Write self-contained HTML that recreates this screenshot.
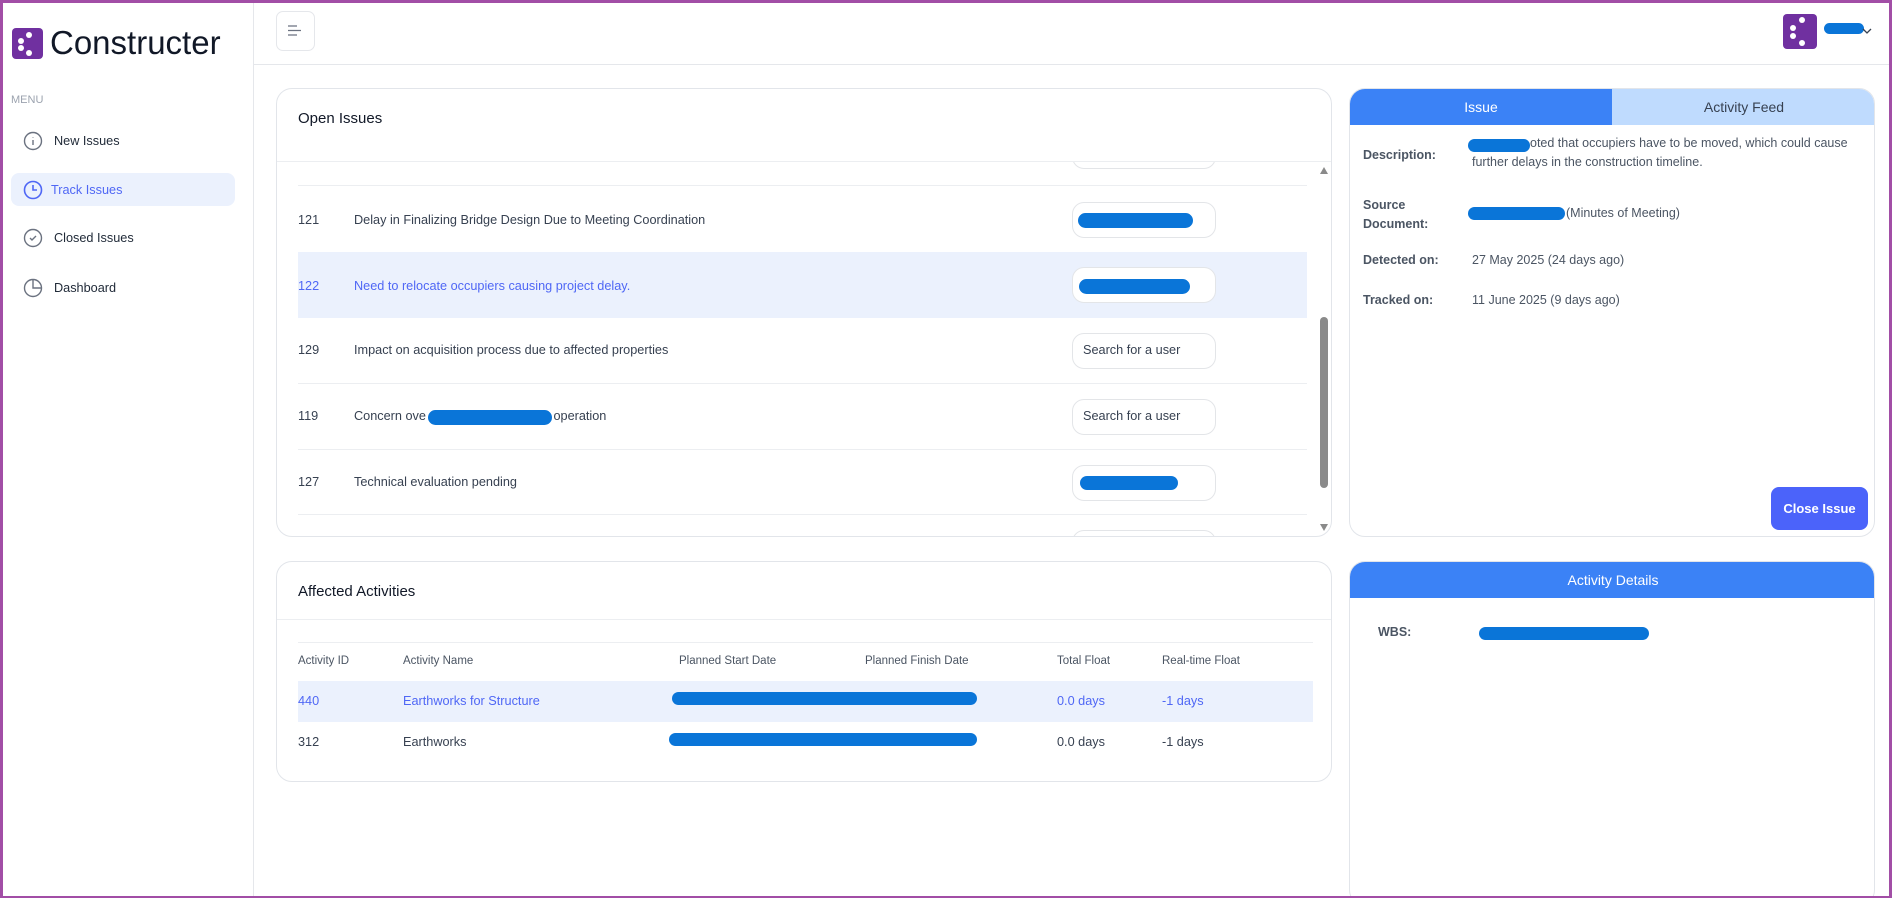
<!DOCTYPE html>
<html style="overflow:hidden"><head><meta charset="utf-8"><style>
*{box-sizing:border-box;margin:0;padding:0}
html,body{width:1892px;height:898px;overflow:hidden}
body{background:#fff;font-family:"Liberation Sans",sans-serif;color:#374151;position:relative}
.frame{position:absolute;left:0;top:0;width:1892px;height:898px;border:3px solid #a24ea6;border-bottom-width:2px;pointer-events:none;z-index:10}
.a{position:absolute}
.t{position:absolute;white-space:nowrap;font-size:12.7px}
.blob{position:absolute;background:#0a75d8;border-radius:10px}
.card{position:absolute;border:1px solid #e2e5ea;border-radius:16px;background:#fff;overflow:hidden}
.line{position:absolute;height:1px;background:#eceef1}
.pill{position:absolute;width:144px;height:36px;border:1px solid #e3e5e8;border-radius:12px;background:#fff}
.lbl{position:absolute;font-size:12.5px;font-weight:bold;color:#4b5563;white-space:nowrap}
</style></head><body>
<div class="frame"></div>
<div class="a" style="left:253px;top:0;width:1px;height:898px;background:#e5e7eb"></div>
<svg class="a" style="left:12px;top:28px" width="31" height="31" viewBox="0 0 31 31"><rect width="31" height="31" rx="4" fill="#7030a0"/><circle cx="17" cy="7" r="3" fill="#fff"/><circle cx="9" cy="13" r="3" fill="#fff"/><circle cx="9" cy="20" r="3" fill="#fff"/><circle cx="17" cy="25" r="3" fill="#fff"/></svg>
<div class="t" style="left:50px;top:24px;font-size:33px;color:#111827">Constructer</div>
<div class="t" style="left:11px;top:94px;font-size:11px;color:#9ca3af">MENU</div>
<svg class="a" style="left:23px;top:131px" width="20" height="20" viewBox="0 0 20 20" fill="none" stroke="#6b7280" stroke-width="1.4"><circle cx="10" cy="10" r="8.5"/><path d="M10 9v5M10 6v.5"/></svg>
<div class="t" style="left:54px;top:134px;color:#1f2937">New Issues</div>
<div class="a" style="left:11px;top:173px;width:224px;height:33px;background:#ebf1fd;border-radius:8px"></div>
<svg class="a" style="left:23px;top:180px" width="20" height="20" viewBox="0 0 20 20" fill="none" stroke="#4f67f5" stroke-width="1.6"><circle cx="10" cy="10" r="8.5"/><path d="M10 5v5h4"/></svg>
<div class="t" style="left:51px;top:183px;color:#4f67f5">Track Issues</div>
<svg class="a" style="left:23px;top:228px" width="20" height="20" viewBox="0 0 20 20" fill="none" stroke="#6b7280" stroke-width="1.4"><circle cx="10" cy="10" r="8.5"/><path d="M7 10l2 2 4-4"/></svg>
<div class="t" style="left:54px;top:231px;color:#1f2937">Closed Issues</div>
<svg class="a" style="left:23px;top:278px" width="20" height="20" viewBox="0 0 20 20" fill="none" stroke="#6b7280" stroke-width="1.4"><circle cx="10" cy="10" r="8.5"/><path d="M10 1.5V10h8.5"/></svg>
<div class="t" style="left:54px;top:281px;color:#1f2937">Dashboard</div>
<div class="a" style="left:254px;top:64px;width:1638px;height:1px;background:#e5e7eb"></div>
<div class="a" style="left:276px;top:11px;width:39px;height:40px;border:1px solid #e5e7eb;border-radius:7px"></div>
<svg class="a" style="left:288px;top:25px" width="14" height="12" viewBox="0 0 14 12" stroke="#6b7280" stroke-width="1.2"><path d="M0 1h9M0 5.5h13M0 10h9"/></svg>
<svg class="a" style="left:1783px;top:14px" width="34" height="35" viewBox="0 0 34 35"><rect width="34" height="35" rx="4" fill="#7030a0"/><circle cx="19" cy="6" r="3" fill="#fff"/><circle cx="10" cy="14" r="3" fill="#fff"/><circle cx="10" cy="22" r="3" fill="#fff"/><circle cx="19" cy="29" r="3" fill="#fff"/></svg>
<div class="blob" style="left:1824px;top:23px;width:40px;height:11px"></div>
<svg class="a" style="left:1862px;top:28px" width="10" height="7" viewBox="0 0 10 7" fill="none" stroke="#374151" stroke-width="1.3"><path d="M1 1l4 4 4-4"/></svg>
<div class="card" style="left:276px;top:88px;width:1056px;height:449px">
 <div class="t" style="left:21px;top:21px;font-size:15px;color:#111827">Open Issues</div>
 <div class="pill" style="left:795px;top:60px;height:20px;border-radius:0 0 12px 12px"></div>
 <div class="a" style="left:790px;top:52px;width:160px;height:20px;background:#fff"></div>
 <div class="line" style="left:0;top:72px;width:1056px"></div>
 <div class="line" style="left:21px;top:96px;width:1009px"></div>
 <div class="t" style="left:21px;top:124px">121</div><div class="t" style="left:77px;top:124px">Delay in Finalizing Bridge Design Due to Meeting Coordination</div>
 <div class="pill" style="left:795px;top:113px"></div><div class="blob" style="left:801px;top:124px;width:115px;height:15px"></div>
 <div class="a" style="left:21px;top:163px;width:1009px;height:66px;background:#ebf1fd"></div>
 <div class="t" style="left:21px;top:190px;color:#4f67f5">122</div><div class="t" style="left:77px;top:190px;color:#4f67f5">Need to relocate occupiers causing project delay.</div>
 <div class="pill" style="left:795px;top:178px"></div><div class="blob" style="left:802px;top:190px;width:111px;height:15px"></div>
 <div class="t" style="left:21px;top:254px">129</div><div class="t" style="left:77px;top:254px">Impact on acquisition process due to affected properties</div>
 <div class="pill" style="left:795px;top:244px"></div><div class="t" style="left:806px;top:254px">Search for a user</div>
 <div class="line" style="left:21px;top:294px;width:1009px"></div>
 <div class="t" style="left:21px;top:320px">119</div><div class="t" style="left:77px;top:320px">Concern ove<span style="display:inline-block;width:124px"></span> operation</div>
 <div class="blob" style="left:151px;top:321px;width:124px;height:15px"></div>
 <div class="pill" style="left:795px;top:310px"></div><div class="t" style="left:806px;top:320px">Search for a user</div>
 <div class="line" style="left:21px;top:360px;width:1009px"></div>
 <div class="t" style="left:21px;top:386px">127</div><div class="t" style="left:77px;top:386px">Technical evaluation pending</div>
 <div class="pill" style="left:795px;top:376px"></div><div class="blob" style="left:803px;top:387px;width:98px;height:14px"></div>
 <div class="line" style="left:21px;top:425px;width:1009px"></div>
 <div class="pill" style="left:795px;top:441px"></div>
 <div class="a" style="left:1043px;top:78px;width:0;height:0;border-left:4px solid transparent;border-right:4px solid transparent;border-bottom:7px solid #8a8a8a"></div>
 <div class="a" style="left:1043px;top:228px;width:8px;height:171px;background:#8a8a8a;border-radius:4px"></div>
 <div class="a" style="left:1043px;top:435px;width:0;height:0;border-left:4px solid transparent;border-right:4px solid transparent;border-top:7px solid #8a8a8a"></div>
</div>
<div class="card" style="left:1349px;top:88px;width:526px;height:449px">
 <div class="a" style="left:0;top:0;width:262px;height:36px;background:#3b82f6"></div>
 <div class="a" style="left:262px;top:0;width:264px;height:36px;background:#bfdbfe"></div>
 <div class="t" style="left:0;top:10px;width:262px;text-align:center;font-size:14px;color:#fff">Issue</div>
 <div class="t" style="left:262px;top:10px;width:264px;text-align:center;font-size:14px;color:#374151">Activity Feed</div>
 <div class="lbl" style="left:13px;top:59px">Description:</div>
 <div class="blob" style="left:118px;top:50px;width:62px;height:13px"></div>
 <div class="t" style="left:180px;top:47px;font-size:12.5px;color:#4b5563">oted that occupiers have to be moved, which could cause</div>
 <div class="t" style="left:122px;top:66px;font-size:12.5px;color:#4b5563">further delays in the construction timeline.</div>
 <div class="lbl" style="left:13px;top:107px;line-height:19px">Source<br>Document:</div>
 <div class="blob" style="left:118px;top:118px;width:97px;height:13px"></div>
 <div class="t" style="left:216px;top:117px;font-size:12.5px;color:#4b5563">(Minutes of Meeting)</div>
 <div class="lbl" style="left:13px;top:164px">Detected on:</div>
 <div class="t" style="left:122px;top:164px;font-size:12.5px;color:#4b5563">27 May 2025 (24 days ago)</div>
 <div class="lbl" style="left:13px;top:204px">Tracked on:</div>
 <div class="t" style="left:122px;top:204px;font-size:12.5px;color:#4b5563">11 June 2025 (9 days ago)</div>
 <div class="a" style="left:421px;top:398px;width:97px;height:43px;background:#4b63fa;border-radius:8px;color:#fff;font-size:13px;font-weight:bold;text-align:center;line-height:43px">Close Issue</div>
</div>
<div class="card" style="left:276px;top:561px;width:1056px;height:221px">
 <div class="t" style="left:21px;top:21px;font-size:15px;color:#111827">Affected Activities</div>
 <div class="line" style="left:0;top:57px;width:1056px"></div>
 <div class="line" style="left:21px;top:80px;width:1015px"></div>
 <div class="t" style="left:21px;top:93px;font-size:11.5px;color:#4b5563">Activity ID</div>
 <div class="t" style="left:126px;top:93px;font-size:11.5px;color:#4b5563">Activity Name</div>
 <div class="t" style="left:402px;top:93px;font-size:11.5px;color:#4b5563">Planned Start Date</div>
 <div class="t" style="left:588px;top:93px;font-size:11.5px;color:#4b5563">Planned Finish Date</div>
 <div class="t" style="left:780px;top:93px;font-size:11.5px;color:#4b5563">Total Float</div>
 <div class="t" style="left:885px;top:93px;font-size:11.5px;color:#4b5563">Real-time Float</div>
 <div class="a" style="left:21px;top:119px;width:1015px;height:41px;background:#ebf1fd"></div>
 <div class="t" style="left:21px;top:132px;color:#4f67f5">440</div>
 <div class="t" style="left:126px;top:132px;color:#4f67f5">Earthworks for Structure</div>
 <div class="blob" style="left:395px;top:130px;width:305px;height:13px"></div>
 <div class="t" style="left:780px;top:132px;color:#4f67f5">0.0 days</div>
 <div class="t" style="left:885px;top:132px;color:#4f67f5">-1 days</div>
 <div class="t" style="left:21px;top:173px">312</div>
 <div class="t" style="left:126px;top:173px">Earthworks</div>
 <div class="blob" style="left:392px;top:171px;width:308px;height:13px"></div>
 <div class="t" style="left:780px;top:173px">0.0 days</div>
 <div class="t" style="left:885px;top:173px">-1 days</div>
</div>
<div class="card" style="left:1349px;top:561px;width:526px;height:345px">
 <div class="a" style="left:0;top:0;width:526px;height:36px;background:#3b82f6"></div>
 <div class="t" style="left:0;top:10px;width:526px;text-align:center;font-size:14px;color:#fff">Activity Details</div>
 <div class="lbl" style="left:28px;top:63px">WBS:</div>
 <div class="blob" style="left:129px;top:65px;width:170px;height:13px"></div>
</div>
</body></html>
